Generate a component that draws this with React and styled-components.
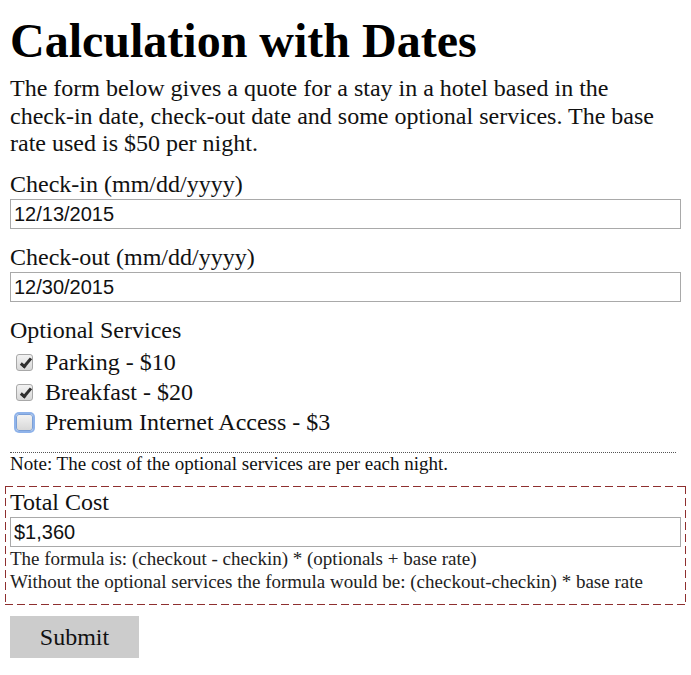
import React, { useState } from "react"
import styled, { createGlobalStyle } from "styled-components"

const GlobalStyle = createGlobalStyle`
  html, body {
    margin: 0;
    padding: 0;
    background: #fff;
  }
  body {
    font-family: "Liberation Serif", "Times New Roman", serif;
    color: #111;
  }
`

const services = [
  { id: "parking", label: "Parking - $10", price: 10, checked: true },
  { id: "breakfast", label: "Breakfast - $20", price: 20, checked: true },
  { id: "internet", label: "Premium Internet Access - $3", price: 3, checked: false, focused: true },
]

const App = () => {
  const [checkIn, setCheckIn] = useState("12/13/2015")
  const [checkOut, setCheckOut] = useState("12/30/2015")
  const [checked, setChecked] = useState(services.map((s) => s.checked))

  const toggle = (i) => setChecked((prev) => prev.map((v, j) => (j === i ? !v : v)))

  return (
    <>
      <GlobalStyle />
      <Page>
        <Title>Calculation with Dates</Title>
        <Intro>
          The form below gives a quote for a stay in a hotel based in the check-in date, check-out date
          and some optional services. The base rate used is $50 per night.
        </Intro>

        <Field $first>
          <Label htmlFor="checkin">Check-in (mm/dd/yyyy)</Label>
          <TextInput id="checkin" value={checkIn} onChange={(e) => setCheckIn(e.target.value)} />
        </Field>

        <Field>
          <Label htmlFor="checkout">Check-out (mm/dd/yyyy)</Label>
          <TextInput id="checkout" value={checkOut} onChange={(e) => setCheckOut(e.target.value)} />
        </Field>

        <Field>
          <Label as="div">Optional Services</Label>
          <Services>
            {services.map((s, i) => (
              <ServiceRow key={s.id}>
                <Checkbox
                  type="checkbox"
                  id={s.id}
                  checked={checked[i]}
                  $focused={s.focused}
                  onChange={() => toggle(i)}
                />
                <label htmlFor={s.id}>{s.label}</label>
              </ServiceRow>
            ))}
          </Services>
        </Field>

        <Note>Note: The cost of the optional services are per each night.</Note>

        <TotalBox>
          <Label htmlFor="total">Total Cost</Label>
          <TextInput id="total" value="$1,360" readOnly />
          <Formula>The formula is: (checkout - checkin) * (optionals + base rate)</Formula>
          <Formula>Without the optional services the formula would be: (checkout-checkin) * base rate</Formula>
        </TotalBox>

        <SubmitButton type="button">Submit</SubmitButton>
      </Page>
    </>
  )
}

export default App

const Page = styled.div`
  padding: 0 10px 20px;
`

const Title = styled.h1`
  margin: 13px 0 0;
  font-size: 48px;
  font-weight: bold;
  color: #000;
`

const Intro = styled.p`
  margin: 7px 0 0;
  max-width: 660px;
  font-size: 24px;
  line-height: 27.6px;
`

const Field = styled.div`
  margin-top: ${(p) => (p.$first ? "13px" : "14.5px")};
  display: flex;
  flex-direction: column;
`

const Label = styled.label`
  font-size: 24px;
  line-height: 27.6px;
  margin-bottom: 1px;
`

const TextInput = styled.input`
  box-sizing: border-box;
  width: 100%;
  height: 30px;
  margin: 0;
  padding: 0 3px;
  border: 1px solid #a9a9a9;
  font-family: "Liberation Sans", Arial, sans-serif;
  font-size: 20px;
  color: #111;
  background: #fff;
  outline: none;
`

const Services = styled.div`
  display: flex;
  flex-direction: column;
  margin-top: 2px;
`

const ServiceRow = styled.div`
  display: flex;
  align-items: center;
  height: 30px;
  font-size: 24px;

  label {
    line-height: 27.6px;
  }
`

const Checkbox = styled.input`
  appearance: none;
  box-sizing: border-box;
  width: 17px;
  height: 17px;
  margin: 0 12px 0 6px;
  border: 1px solid ${(p) => (p.$focused ? "#7b9fd6" : "#a8a8a8")};
  border-radius: 3px;
  background: linear-gradient(#f2f2f2, #d8d8d8);
  box-shadow: ${(p) => (p.$focused ? "0 0 0 2px #8fb3ea" : "none")};
  position: relative;
  cursor: pointer;

  &:checked::after {
    content: "";
    position: absolute;
    left: 6px;
    top: 1px;
    width: 3px;
    height: 9px;
    border: solid #2e2e2e;
    border-width: 0 3px 3px 0;
    transform: rotate(40deg);
  }
`

const Note = styled.div`
  margin-top: 14px;
  margin-right: 5px;
  border-top: 1px dotted #555;
  font-size: 19px;
  line-height: 22px;
`

const dash = "#8e2f2f"

const TotalBox = styled.div`
  margin: 11px -5px 0;
  padding: 3px 5px 12px;
  display: flex;
  flex-direction: column;
  background:
    repeating-linear-gradient(90deg, ${dash} 0 8px, transparent 8px 12px) top / 100% 1px no-repeat,
    repeating-linear-gradient(90deg, ${dash} 0 8px, transparent 8px 12px) bottom / 100% 1px no-repeat,
    repeating-linear-gradient(180deg, ${dash} 0 8px, transparent 8px 12px) left / 1px 100% no-repeat,
    repeating-linear-gradient(180deg, ${dash} 0 8px, transparent 8px 12px) right / 1px 100% no-repeat;
`

const Formula = styled.div`
  font-size: 19px;
  line-height: 23px;
  color: #222;
`

const SubmitButton = styled.button`
  margin-top: 11px;
  width: 129px;
  height: 42px;
  border: none;
  background: #cccccc;
  font-family: "Liberation Serif", "Times New Roman", serif;
  font-size: 24px;
  color: #111;
  cursor: pointer;
`
